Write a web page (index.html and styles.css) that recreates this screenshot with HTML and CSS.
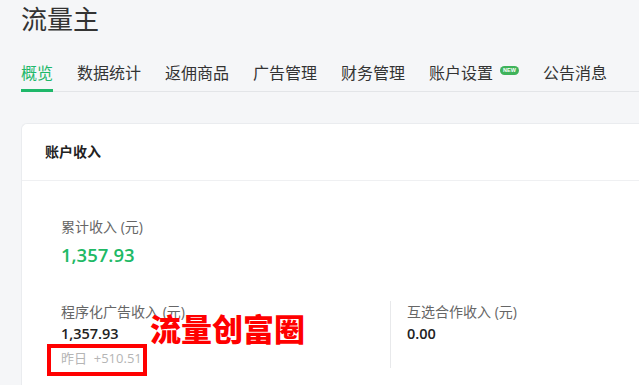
FILE: index.html
```html
<!DOCTYPE html>
<html lang="zh">
<head>
<meta charset="utf-8">
<title>流量主</title>
<link rel="stylesheet" href="styles.css">
</head>
<body>
<div class="page">
  <h1 class="title">流量主</h1>
  <nav class="tabs">
    <a class="tab active">概览</a>
    <a class="tab">数据统计</a>
    <a class="tab">返佣商品</a>
    <a class="tab">广告管理</a>
    <a class="tab">财务管理</a>
    <a class="tab">账户设置<span class="badge">NEW</span></a>
    <a class="tab">公告消息</a>
  </nav>
  <section class="card">
    <div class="card-head">账户收入</div>
    <div class="card-body">
      <div class="stat">
        <div class="label">累计收入 (元)</div>
        <div class="value-green">1,357.93</div>
      </div>
      <div class="cols">
        <div class="col col-left">
          <div class="label">程序化广告收入 (元)</div>
          <div class="value">1,357.93</div>
          <div class="sub">昨日 &nbsp;+510.51</div>
          <div class="mark-box"></div>
          <div class="watermark">流量创富圈</div>
        </div>
        <div class="col col-right">
          <div class="label">互选合作收入 (元)</div>
          <div class="value">0.00</div>
        </div>
      </div>
    </div>
  </section>
</div>
</body>
</html>
```

FILE: styles.css
```css
html, body {
  margin: 0;
  padding: 0;
}
body {
  background: #f5f6f8;
  font-family: "Open Sans", "Noto Sans CJK SC", sans-serif;
  color: #333;
  overflow: hidden;
}
.page {
  padding-left: 21px;
}
.title {
  margin: 0;
  height: 38px;
  line-height: 38px;
  font-size: 26px;
  font-weight: 400;
  color: #333;
}
.tabs {
  display: flex;
  gap: 24px;
  padding-top: 23px;
  border-bottom: 1px solid #e3e5e8;
}
.tab {
  display: flex;
  align-items: flex-start;
  font-size: 16px;
  line-height: 24px;
  padding-bottom: 4px;
  border-bottom: 3px solid transparent;
  margin-bottom: -1px;
  color: #333;
}
.tab.active {
  color: #1fb86a;
  border-bottom-color: #1fb86a;
}
.badge {
  margin-left: 7px;
  margin-top: 5px;
  height: 9px;
  line-height: 9px;
  padding: 0 3px;
  border-radius: 5px;
  background: #3fb35b;
  color: #fff;
  font-size: 5.5px;
  font-weight: 700;
  font-family: "Liberation Sans", sans-serif;
}
.card {
  margin-top: 31px;
  background: #fff;
  border: 1px solid #eaecef;
  border-right: none;
  border-radius: 6px 0 0 6px;
  min-height: 270px;
}
.card-head {
  height: 56px;
  line-height: 56px;
  padding-left: 23px;
  font-size: 14px;
  font-weight: 700;
  color: #222;
  border-bottom: 1px solid #eff0f2;
}
.card-body {
  padding: 35px 0 0 39px;
}
.label {
  font-size: 14px;
  line-height: 22px;
  color: #666;
}
.value-green {
  margin-top: 3px;
  font-size: 18.5px;
  line-height: 28px;
  font-weight: 600;
  color: #20b965;
}
.cols {
  display: grid;
  grid-template-columns: 329px 1fr;
  margin-top: 32px;
}
.col {
  position: relative;
}
.col-right {
  border-left: 1px solid #e8e9eb;
  padding-left: 16px;
  height: 67px;
}
.value {
  font-size: 14.5px;
  line-height: 22px;
  font-weight: 600;
  color: #222;
}
.sub {
  margin-top: 2px;
  font-size: 13px;
  line-height: 22px;
  color: #b5b5b5;
}
.mark-box {
  position: absolute;
  left: -14px;
  top: 43px;
  width: 100px;
  height: 32px;
  box-sizing: border-box;
  border: 4px solid #f00;
}
.watermark {
  position: absolute;
  left: 89px;
  top: 10px;
  font-family: "Noto Sans CJK SC", sans-serif;
  font-size: 31px;
  line-height: 34px;
  font-weight: 900;
  color: #f00;
  white-space: nowrap;
}
```
